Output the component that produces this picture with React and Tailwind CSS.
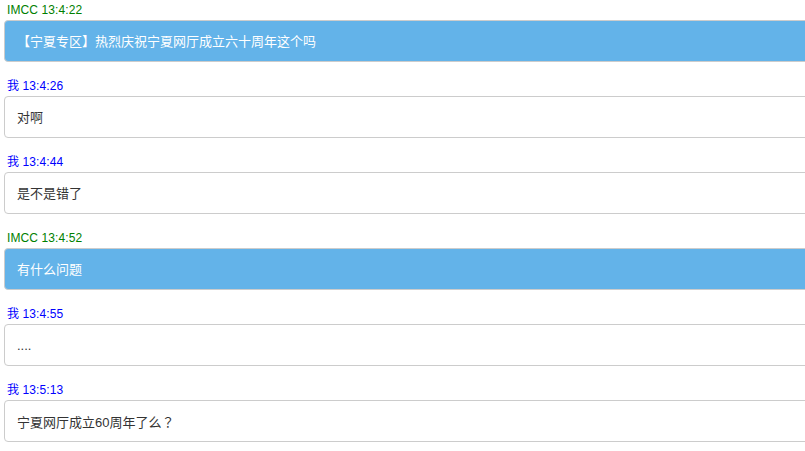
import React from "react";

const msgs = [
  { who: "IMCC", time: "13:4:22", text: "【宁夏专区】热烈庆祝宁夏网厅成立六十周年这个吗", other: true },
  { who: "我", time: "13:4:26", text: "对啊" },
  { who: "我", time: "13:4:44", text: "是不是错了" },
  { who: "IMCC", time: "13:4:52", text: "有什么问题", other: true },
  { who: "我", time: "13:4:55", text: "...." },
  { who: "我", time: "13:5:13", text: "宁夏网厅成立60周年了么", tail: "？" },
];

export default function App() {
  return (
    <div
      className="w-[805px] h-[451px] overflow-hidden bg-white pl-[4px]"
      style={{ fontFamily: '"Liberation Sans", "Noto Sans CJK SC", sans-serif' }}
    >
      <div className="w-[820px]">
        {msgs.map((m, i) => (
          <div key={i} className="mb-[14px]">
            <div
              className={
                "h-[20px] leading-[20px] text-[12px] pl-[3px] tracking-[0.1px] " +
                (m.other ? "text-[#008000]" : "text-[#0000ff]")
              }
            >
              {m.who} {m.time}
            </div>
            {m.other ? (
              <div className="h-[42px] border border-[#cccccc] rounded-[4px] bg-[#63b3e9] text-white text-[13px] leading-[41px] pl-[12px]">
                {m.text}
              </div>
            ) : (
              <div className="h-[42px] border border-[#cccccc] rounded-[4px] bg-white text-[#333333] text-[13px] leading-[41px] pl-[12px]">
                {m.text}
                {m.tail ? (
                  <span className="font-['Noto_Sans_CJK_TC',sans-serif]">{m.tail}</span>
                ) : null}
              </div>
            )}
          </div>
        ))}
      </div>
    </div>
  );
}
